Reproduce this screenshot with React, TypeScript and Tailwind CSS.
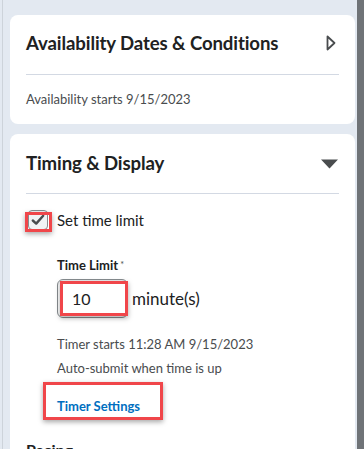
import React from 'react';

function RedBox({ className }: { className: string }) {
  return (
    <div
      className={`pointer-events-none absolute border-[3px] border-[#f0464a] shadow-[0_2px_5px_rgba(0,0,0,0.35)] ${className}`}
    />
  );
}

export default function App() {
  return (
    <div className="flex h-[449px] w-[364px] overflow-hidden bg-[#e3e9f1] font-['Lato',sans-serif] text-[#202122]">
      {/* left gutter */}
      <div className="flex w-[10px] shrink-0">
        <div className="ml-[2px] w-px bg-[#cdd3da]" />
      </div>

      <div className="flex w-[345px] shrink-0 flex-col gap-[10px] pt-[15px]">
        {/* Availability card */}
        <div className="h-[109px] shrink-0 rounded-[8px] bg-white px-4">
          <div className="flex h-[59px] items-center justify-between pb-[1px]">
            <h2 className="text-[18.6px] font-bold tracking-[-0.1px]">Availability Dates &amp; Conditions</h2>
            <svg width="10" height="16" viewBox="0 0 10 16" className="mr-[3px] mb-[2px]">
              <path d="M1.5 1.5 L8.5 8 L1.5 14.5 Z" fill="none" stroke="#494c4e" strokeWidth="1.8" strokeLinejoin="round" />
            </svg>
          </div>
          <div className="h-px bg-[#d3d9e3]" />
          <p className="mt-[14px] text-[13px] leading-5 text-[#494c4e]">Availability starts 9/15/2023</p>
        </div>

        {/* Timing card */}
        <div className="flex-1 rounded-t-[8px] bg-white px-4">
          <div className="flex h-[59px] items-center justify-between pb-[0px]">
            <h2 className="text-[18.6px] font-bold tracking-[-0.1px]">Timing &amp; Display</h2>
            <svg width="17" height="10" viewBox="0 0 17 10" className="mr-[1px]">
              <path d="M0 0.5 H17 L8.5 9.5 Z" fill="#494c4e" />
            </svg>
          </div>
          <div className="h-px bg-[#d3d9e3]" />

          <div className="relative mt-[16px] flex h-[20px] items-center">
            <div className="ml-[2px] flex h-[20px] w-[20px] items-center justify-center rounded-[4px] border border-[#868c8f] bg-[#f1f3f5]">
              <svg width="14" height="12" viewBox="0 0 14 12">
                <path d="M1.8 6.5 L5.2 9.6 L12.2 1.8" fill="none" stroke="#494c4e" strokeWidth="2.4" strokeLinecap="round" strokeLinejoin="round" />
              </svg>
            </div>
            <span className="ml-[9px] text-[15px]">Set time limit</span>
            <RedBox className="left-[-1px] top-[2px] h-[20px] w-[27px]" />
          </div>

          <div className="ml-[31px]">
            <p className="mt-[26px] text-[13px] font-bold leading-[18px]">
              Time Limit<span className="ml-[2px] align-top text-[9px] font-normal text-[#494c4e]">*</span>
            </p>
            <div className="mt-[5px] flex items-center">
              <div className="relative flex h-[39px] w-[71px] items-center rounded-[6px] border border-[#868c8f] pl-[14px] text-[16px] shadow-[inset_0_2px_0_rgba(181,189,194,0.25)]">
                10
                <RedBox className="left-[2px] top-[1px] h-[35px] w-[68px]" />
              </div>
              <span className="ml-[4px] text-[17px]">minute(s)</span>
            </div>
            <p className="mt-[16px] text-[13px] leading-5 text-[#494c4e]">Timer starts 11:28 AM 9/15/2023</p>
            <p className="mt-[4px] text-[13px] leading-5 text-[#494c4e]">Auto-submit when time is up</p>
            <div className="relative mt-[15px] h-5">
              <span className="text-[13px] font-bold leading-5 text-[#006fbf]">Timer Settings</span>
              <RedBox className="left-[-14px] top-[-11px] h-[38px] w-[120px]" />
            </div>
          </div>
          <p className="mt-[27px] text-[16px] font-bold leading-5">Pacing</p>
        </div>
      </div>

      {/* right scrollbar strip */}
      <div className="ml-[2px] w-[7px] shrink-0 bg-[#6f7377]" />
    </div>
  );
}
